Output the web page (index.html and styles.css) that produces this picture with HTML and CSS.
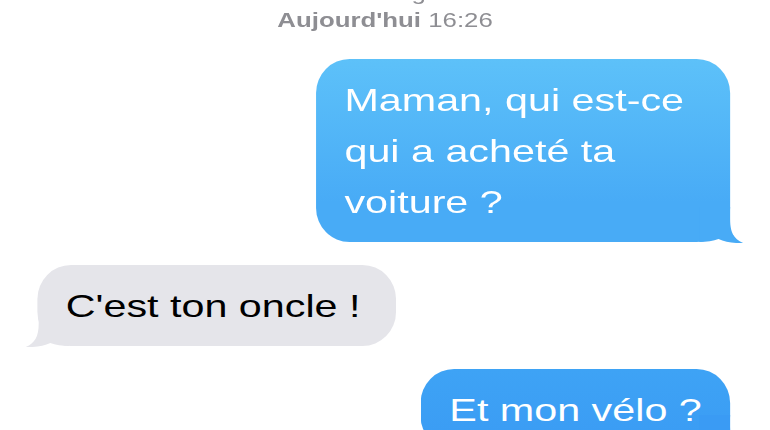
FILE: index.html
```html
<!DOCTYPE html>
<html lang="fr">
<head>
    <meta charset="utf-8">
    <title>Messages</title>
    <link rel="stylesheet" href="styles.css">
</head>
<body>
    <div class="screen">
        <div class="header">
            <div class="service">iMessage</div>
            <div class="stamp"><b>Aujourd'hui</b> 16:26</div>
        </div>
        <div class="thread">
            <div class="bubble sent first">
                Maman, qui est-ce qui a acheté ta voiture ?
                <svg class="tail" width="34" height="36" viewBox="0 0 34 36"><path d="M0 0 H24 V12 C24 26 27 32 34 36 C27 36.5 20 35 15 32 C11 34 6 35 0 35 Z" fill="#48abf6"/></svg>
            </div>
            <div class="bubble received">
                C'est ton oncle !
                <svg class="tail" width="34" height="36" viewBox="0 0 34 36"><path d="M0 0 H24 V12 C24 26 27 32 34 36 C27 36.5 20 35 15 32 C11 34 6 35 0 35 Z" fill="#e5e5ea"/></svg>
            </div>
            <div class="bubble sent second">
                Et mon vélo ?
                <svg class="tail" width="34" height="36" viewBox="0 0 34 36"><path d="M0 0 H24 V12 C24 26 27 32 34 36 C27 36.5 20 35 15 32 C11 34 6 35 0 35 Z" fill="#3a9bf4"/></svg>
            </div>
        </div>
    </div>
</body>
</html>
```

FILE: styles.css
```css
body {
    margin: 0;
    background: #fff;
    font-family: "Liberation Sans", Arial, sans-serif;
    overflow: hidden;
}

/* the capture is stretched horizontally, so the whole screen is too */
.screen {
    width: 597px;
    transform: scaleX(1.29);
    transform-origin: 0 0;
}

.header {
    margin-top: -20px;
    text-align: center;
    color: #8e8e93;
    font-size: 20px;
    line-height: 27px;
}

.stamp b {
    font-weight: bold;
}

.thread {
    display: flex;
    flex-direction: column;
    gap: 23px;
    margin-top: 25px;
}

.bubble {
    position: relative;
    box-sizing: border-box;
    max-width: 321px;
    padding: 16px 22px 14px 22px;
    border-radius: 26px / 34px;
    font-size: 32px;
    line-height: 51px;
}

.sent {
    align-self: flex-end;
    margin-right: 31px;
    color: #fff;
}

/* last 40px stay flat so the tail blends in */
.first {
    background: linear-gradient(#5dc1f9, #48abf6 calc(100% - 40px));
}

.second {
    background: linear-gradient(#3ea3f5, #3a9bf4);
}

.received {
    align-self: flex-start;
    margin-left: 29px;
    padding-right: 28px;
    background: #e5e5ea;
    color: #000;
}

.tail {
    position: absolute;
    bottom: -1px;
}

.sent .tail {
    right: -10px;
}

.received .tail {
    left: -9px;
    transform: scaleX(-1);
}
```
